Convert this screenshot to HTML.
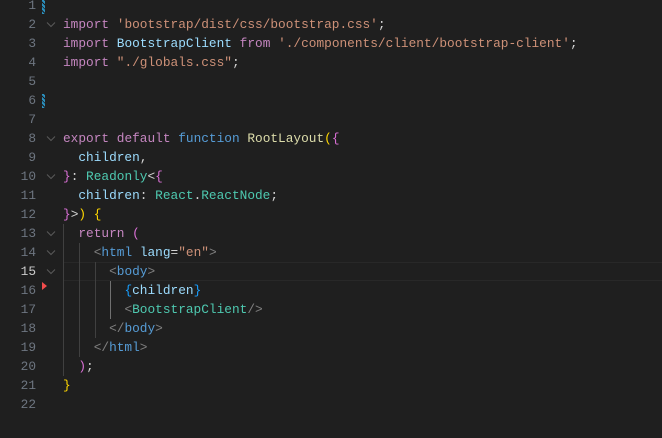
<!DOCTYPE html><html><head><style>
body{margin:0;width:662px;height:438px;background:#1f1f1f;overflow:hidden;font-family:"Liberation Mono",monospace;font-size:12.8px}
.l{position:absolute;left:0;height:19px;line-height:19px;white-space:pre;width:662px}
.n{position:absolute;width:36px;text-align:right;color:#6e7681;left:0}
.c{position:absolute;left:63px;color:#d4d4d4}
.f{position:absolute;left:46px;top:6px;width:10px;height:7px}
.k{color:#c586c0}.s{color:#ce9178}.b{color:#569cd6}.fn{color:#dcdcaa}.v{color:#9cdcfe}.t{color:#4ec9b0}.g{color:#808080}
.y{color:#ffd700}.p{color:#da70d6}.u{color:#179fff}
.ig{position:absolute;width:1px;background:#404040}
</style></head><body>
<svg width="0" height="0" style="position:absolute"><defs><symbol id="ch" viewBox="0 0 10 7"><path d="M1 1.5 L5 5.5 L9 1.5" fill="none" stroke="#5a5a5a" stroke-width="1"/></symbol></defs></svg>
<div style="position:absolute;left:63px;top:262px;width:599px;height:17px;border-top:1px solid #282828;border-bottom:1px solid #282828"></div>
<div style="position:absolute;left:42px;top:0;width:3px;height:14px;background:repeating-linear-gradient(45deg,#2a8fbd 0 2px,#1f1f1f 2px 3px)"></div>
<div style="position:absolute;left:42px;top:94px;width:3px;height:14px;background:repeating-linear-gradient(45deg,#2a8fbd 0 2px,#1f1f1f 2px 3px)"></div>
<div style="position:absolute;left:42px;top:282px;width:0;height:0;border-left:5px solid #f14c4c;border-top:4px solid transparent;border-bottom:4px solid transparent"></div>
<div class="ig" style="left:63px;top:224px;height:152px"></div>
<div class="ig" style="left:79px;top:243px;height:114px"></div>
<div class="ig" style="left:95px;top:262px;height:76px"></div>
<div class="ig" style="left:110px;top:281px;height:38px;background:#707070"></div>
<div class="l" style="top:-4px"><span class="n">1</span></div>
<div class="l" style="top:15px"><span class="n">2</span><svg class="f"><use href="#ch"/></svg><span class="c"><span class="k">import</span> <span class="s">'bootstrap/dist/css/bootstrap.css'</span>;</span></div>
<div class="l" style="top:34px"><span class="n">3</span><span class="c"><span class="k">import</span> <span class="v">BootstrapClient</span> <span class="k">from</span> <span class="s">'./components/client/bootstrap-client'</span>;</span></div>
<div class="l" style="top:53px"><span class="n">4</span><span class="c"><span class="k">import</span> <span class="s">"./globals.css"</span>;</span></div>
<div class="l" style="top:72px"><span class="n">5</span></div>
<div class="l" style="top:91px"><span class="n">6</span></div>
<div class="l" style="top:110px"><span class="n">7</span></div>
<div class="l" style="top:129px"><span class="n">8</span><svg class="f"><use href="#ch"/></svg><span class="c"><span class="k">export</span> <span class="k">default</span> <span class="b">function</span> <span class="fn">RootLayout</span><span class="y">(</span><span class="p">{</span></span></div>
<div class="l" style="top:148px"><span class="n">9</span><span class="c">  <span class="v">children</span>,</span></div>
<div class="l" style="top:167px"><span class="n">10</span><svg class="f"><use href="#ch"/></svg><span class="c"><span class="p">}</span>: <span class="t">Readonly</span>&lt;<span class="p">{</span></span></div>
<div class="l" style="top:186px"><span class="n">11</span><span class="c">  <span class="v">children</span>: <span class="t">React</span>.<span class="t">ReactNode</span>;</span></div>
<div class="l" style="top:205px"><span class="n">12</span><span class="c"><span class="p">}</span>&gt;<span class="y">)</span> <span class="y">{</span></span></div>
<div class="l" style="top:224px"><span class="n">13</span><svg class="f"><use href="#ch"/></svg><span class="c">  <span class="k">return</span> <span class="p">(</span></span></div>
<div class="l" style="top:243px"><span class="n">14</span><svg class="f"><use href="#ch"/></svg><span class="c">    <span class="g">&lt;</span><span class="b">html</span> <span class="v">lang</span>=<span class="s">"en"</span><span class="g">&gt;</span></span></div>
<div class="l" style="top:262px"><span class="n" style="color:#ccc">15</span><svg class="f"><use href="#ch"/></svg><span class="c">      <span class="g">&lt;</span><span class="b">body</span><span class="g">&gt;</span></span></div>
<div class="l" style="top:281px"><span class="n">16</span><span class="c">        <span class="u">{</span><span class="v">children</span><span class="u">}</span></span></div>
<div class="l" style="top:300px"><span class="n">17</span><span class="c">        <span class="g">&lt;</span><span class="t">BootstrapClient</span><span class="g">/&gt;</span></span></div>
<div class="l" style="top:319px"><span class="n">18</span><span class="c">      <span class="g">&lt;/</span><span class="b">body</span><span class="g">&gt;</span></span></div>
<div class="l" style="top:338px"><span class="n">19</span><span class="c">    <span class="g">&lt;/</span><span class="b">html</span><span class="g">&gt;</span></span></div>
<div class="l" style="top:357px"><span class="n">20</span><span class="c">  <span class="p">)</span>;</span></div>
<div class="l" style="top:376px"><span class="n">21</span><span class="c"><span class="y">}</span></span></div>
<div class="l" style="top:395px"><span class="n">22</span></div>
</body></html>
